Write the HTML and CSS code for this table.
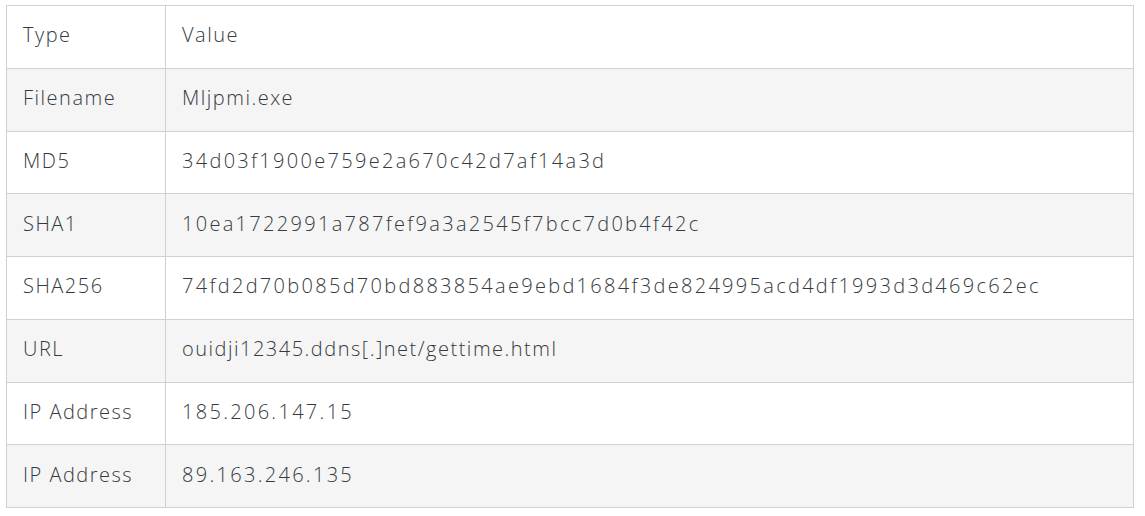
FILE: index.html
```html
<!DOCTYPE html>
<html>
<head>
<meta charset="utf-8">
<link rel="stylesheet" href="styles.css">
</head>
<body>
<table class="ioc">
  <tr><td class="k">Type</td><td>Value</td></tr>
  <tr><td class="k">Filename</td><td>Mljpmi.exe</td></tr>
  <tr><td class="k">MD5</td><td class="num">34d03f1900e759e2a670c42d7af14a3d</td></tr>
  <tr><td class="k">SHA1</td><td class="num">10ea1722991a787fef9a3a2545f7bcc7d0b4f42c</td></tr>
  <tr><td class="k">SHA256</td><td class="num">74fd2d70b085d70bd883854ae9ebd1684f3de824995acd4df1993d3d469c62ec</td></tr>
  <tr><td class="k">URL</td><td>ouidji12345.ddns[.]net/gettime.html</td></tr>
  <tr><td class="k">IP Address</td><td class="num">185.206.147.15</td></tr>
  <tr><td class="k">IP Address</td><td class="num">89.163.246.135</td></tr>
</table>
</body>
</html>
```
FILE: styles.css
```css
html, body {
  margin: 0;
  padding: 0;
  background: #ffffff;
}
body {
  padding: 5px 0 0 6px;
  font-family: "Open Sans", "Noto Sans", sans-serif;
  font-weight: 300;
  color: #343a40;
}
.ioc {
  border-collapse: collapse;
  width: 1128px;
  font-size: 20px;
  letter-spacing: 1.5px;
}
.ioc td {
  border: 1px solid #cdd1d3;
  height: 62.75px;
  padding: 0 16px 3px;
  box-sizing: border-box;
  vertical-align: middle;
  line-height: 24px;
}
.ioc td.k {
  width: 159px;
}
.ioc td.num {
  letter-spacing: 2.3px;
}
.ioc tr:nth-child(even) td {
  background: #f5f5f5;
}
```
